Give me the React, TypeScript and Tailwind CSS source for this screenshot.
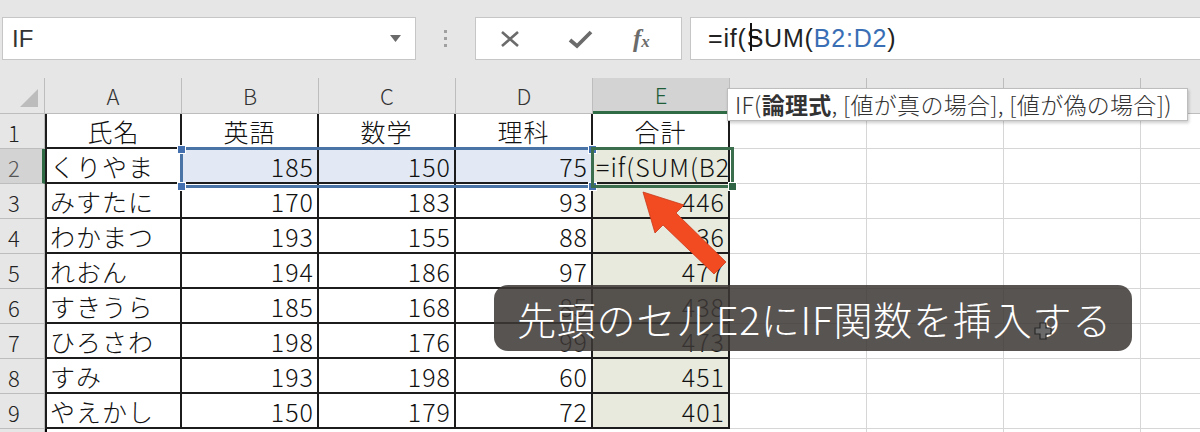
import React from 'react';

const CELL_FONT = { fontFamily: '"Noto Sans CJK JP", "Liberation Sans", sans-serif' };
const UI_FONT = { fontFamily: '"Liberation Sans", "Noto Sans CJK JP", sans-serif' };

const COLS = ['A', 'B', 'C', 'D', 'E', 'F', 'G', 'H', 'I'];

// name, 英語, 数学, 理科, 合計
const ROWS: [string, string, string, string, string][] = [
  ['くりやま', '185', '150', '75', '=if(SUM(B2'],
  ['みすたに', '170', '183', '93', '446'],
  ['わかまつ', '193', '155', '88', '436'],
  ['れおん', '194', '186', '97', '477'],
  ['すきうら', '185', '168', '85', '438'],
  ['ひろさわ', '198', '176', '99', '473'],
  ['すみ', '193', '198', '60', '451'],
  ['やえかし', '150', '179', '72', '401'],
];

function ColumnHeader() {
  return (
    <div className="flex h-[36px] shrink-0">
      <div className="relative h-full w-[45px] shrink-0 border-b border-r border-[#bdbdbd] bg-[#e6e6e6]">
        <svg className="absolute bottom-[6px] right-[6px]" width="18" height="18" viewBox="0 0 18 18">
          <polygon points="18,0 18,18 0,18" fill="#bcbcbc" />
        </svg>
      </div>
      {COLS.map((c) => (
        <div
          key={c}
          className={`box-border flex h-full w-[137px] shrink-0 items-center justify-center border-r text-[22px] font-light ${
            c === 'E'
              ? 'border-b-[3px] border-b-[#2f6b45] border-r-[#bdbdbd] bg-[#d3d3d3] text-[#1f5c38]'
              : 'border-b border-[#bdbdbd] bg-[#e6e6e6] text-[#333]'
          }`}
          style={CELL_FONT}
        >
          {c}
        </div>
      ))}
    </div>
  );
}

function RowHeader({ n }: { n: number }) {
  const active = n === 2;
  return (
    <div
      className={`box-border flex h-full w-[45px] shrink-0 items-end border-b pb-[2px] pl-[8px] text-[22px] font-light leading-[28px] ${
        active
          ? 'border-r-[3px] border-b-[#bdbdbd] border-r-[#2f6b45] bg-[#d3d3d3] text-[#555]'
          : 'border-r border-[#bdbdbd] bg-[#e6e6e6] text-[#222]'
      }`}
      style={CELL_FONT}
    >
      {n}
    </div>
  );
}

function DataCell({
  children,
  align,
  fill,
  first,
}: {
  children?: React.ReactNode;
  align: 'left' | 'right' | 'center';
  fill?: string;
  first?: boolean;
}) {
  const j = align === 'left' ? 'justify-start' : align === 'right' ? 'justify-end' : 'justify-center';
  return (
    <div
      className={`box-border flex h-full w-[137px] shrink-0 items-end overflow-hidden whitespace-nowrap border-b-2 border-r-2 border-[#1c1c1c] px-[3px] pb-[1px] text-[25px] font-light leading-[30px] tracking-[1px] text-[#111] ${j} ${
        first ? 'border-l-2' : ''
      } ${fill ?? 'bg-white'}`}
      style={CELL_FONT}
    >
      {children}
    </div>
  );
}

function EmptyCells() {
  return (
    <>
      {['F', 'G', 'H', 'I'].map((c) => (
        <div key={c} className="box-border h-full w-[137px] shrink-0 border-b border-r border-[#d6d6d6] bg-white" />
      ))}
    </>
  );
}

function Grid() {
  return (
    <div className="flex flex-col">
      <ColumnHeader />
      <div className="flex h-[35px] shrink-0">
        <RowHeader n={1} />
        <DataCell align="center" first>氏名</DataCell>
        <DataCell align="center">英語</DataCell>
        <DataCell align="center">数学</DataCell>
        <DataCell align="center">理科</DataCell>
        <DataCell align="center">合計</DataCell>
        <EmptyCells />
      </div>
      {ROWS.map((r, i) => {
        const n = i + 2;
        const sel = n === 2;
        return (
          <div key={n} className="flex h-[35px] shrink-0">
            <RowHeader n={n} />
            <DataCell align="left" first>{r[0]}</DataCell>
            <DataCell align="right" fill={sel ? 'bg-[#e2e9f4]' : undefined}>{r[1]}</DataCell>
            <DataCell align="right" fill={sel ? 'bg-[#e2e9f4]' : undefined}>{r[2]}</DataCell>
            <DataCell align="right" fill={sel ? 'bg-[#e2e9f4]' : undefined}>{r[3]}</DataCell>
            <DataCell align={sel ? 'left' : 'right'} fill="bg-[#e7eadc]">{r[4]}</DataCell>
            <EmptyCells />
          </div>
        );
      })}
      <div className="flex h-[35px] shrink-0">
        <div className="h-full w-[45px] shrink-0 border-r border-[#bdbdbd] bg-[#e6e6e6]" />
        <div className="box-border h-full w-[685px] shrink-0 border-l-2 bg-white" />
        <EmptyCells />
      </div>
    </div>
  );
}

function TopBar() {
  return (
    <div className="flex h-[78px] shrink-0 items-start pl-[2px] pt-[17px]">
      <div className="relative flex h-[43px] w-[414px] shrink-0 items-center border border-[#c6c6c6] bg-white pl-[9px] text-[24px] text-[#333]" style={UI_FONT}>
        IF
        <svg className="absolute right-[14px] top-[17px]" width="11" height="7" viewBox="0 0 11 7">
          <polygon points="0,0 11,0 5.5,7" fill="#6a6a6a" />
        </svg>
      </div>
      <div className="flex h-[43px] w-[59px] shrink-0 flex-col items-center justify-center gap-[4px]">
        <div className="h-[3px] w-[3px] bg-[#a0a0a0]" />
        <div className="h-[3px] w-[3px] bg-[#a0a0a0]" />
        <div className="h-[3px] w-[3px] bg-[#a0a0a0]" />
      </div>
      <div className="flex h-[43px] w-[207px] shrink-0 items-center border border-[#c6c6c6] bg-white pl-[23px]">
        <svg width="22" height="18" viewBox="0 0 22 18">
          <path d="M3 2 L19 16 M19 2 L3 16" stroke="#6b6b6b" strokeWidth="2.6" />
        </svg>
        <svg className="ml-[47px]" width="25" height="20" viewBox="0 0 25 20">
          <path d="M2 11 L9 17 L23 3" stroke="#6b6b6b" strokeWidth="3.8" fill="none" />
        </svg>
        <span className="ml-[40px] text-[25px] font-bold italic leading-none text-[#6b6b6b]" style={{ fontFamily: '"Liberation Serif", serif' }}>
          f<span className="text-[17px]">x</span>
        </span>
      </div>
      <div className="relative ml-[8px] flex h-[43px] w-[540px] shrink-0 items-center border border-[#c6c6c6] bg-white pl-[17px] text-[25px] tracking-[0.8px] text-[#222]" style={UI_FONT}>
        <span>=if(</span>
        <span>SUM(</span>
        <span className="text-[#3a6fb5]">B2:D2</span>
        <span>)</span>
        <div className="absolute left-[59px] top-[5px] h-[28px] w-[2px] bg-[#111]" />
        <div className="absolute left-[60px] top-[18px] h-[2px] w-[7px] bg-[#111]" />
      </div>
    </div>
  );
}

export default function App() {
  return (
    <div className="relative h-[432px] w-[1200px] overflow-hidden bg-[#e6e6e6]">
      <TopBar />
      <Grid />

      {/* selection B2:D2 */}
      <div className="absolute left-[180px] top-[147px] h-[41px] w-[414px] border-[3px] border-[#4b74a6]" />
      {[
        'left-[177px] top-[145px]',
        'left-[177px] top-[182px]',
        'left-[588px] top-[145px]',
        'left-[588px] top-[182px]',
      ].map((p) => (
        <div key={p} className={`absolute h-[9px] w-[9px] border border-white bg-[#4470b0] ${p}`} />
      ))}

      {/* active cell E2 */}
      <div className="absolute left-[591px] top-[147px] h-[41px] w-[143px] border-[3px] border-[#3b6e4d]" />
      <div className="absolute left-[728px] top-[182px] h-[9px] w-[9px] border border-white bg-[#2f6445]" />

      {/* function tooltip */}
      <div
        className="absolute left-[727px] top-[88px] flex h-[33px] w-[461px] items-center whitespace-nowrap border border-[#bdbdbd] bg-white pl-[7px] text-[23px] font-light tracking-[0.3px] text-[#333] shadow-[1px_2px_3px_rgba(0,0,0,0.2)]"
        style={CELL_FONT}
      >
        IF(<span className="font-bold">論理式</span>, [値が真の場合], [値が偽の場合])
      </div>

      {/* red arrow */}
      <svg className="absolute left-0 top-0" width="1200" height="432" viewBox="0 0 1200 432">
        <polygon
          points="643,192 684,205 676,213 726,262 714,274 663,225 655,233"
          fill="#f24a21"
          stroke="#c93a1a"
          strokeWidth="0.8"
        />
      </svg>

      {/* caption */}
      <div
        className="absolute left-[494px] top-[285px] flex h-[66px] w-[638px] items-center whitespace-nowrap rounded-[14px] bg-[rgba(60,56,54,0.86)] pl-[23px] text-[39px] font-light tracking-[0.8px] text-white"
        style={CELL_FONT}
      >
        先頭のセルE2にIF関数を挿入する
      </div>

      {/* excel cross cursor */}
      <svg className="absolute left-[1034px] top-[322px]" width="18" height="18" viewBox="0 0 18 18">
        <path d="M6 1 H12 V6 H17 V12 H12 V17 H6 V12 H1 V6 H6 Z" fill="#6a6a6a" stroke="#2a2a2a" strokeWidth="1.2" />
      </svg>
    </div>
  );
}
